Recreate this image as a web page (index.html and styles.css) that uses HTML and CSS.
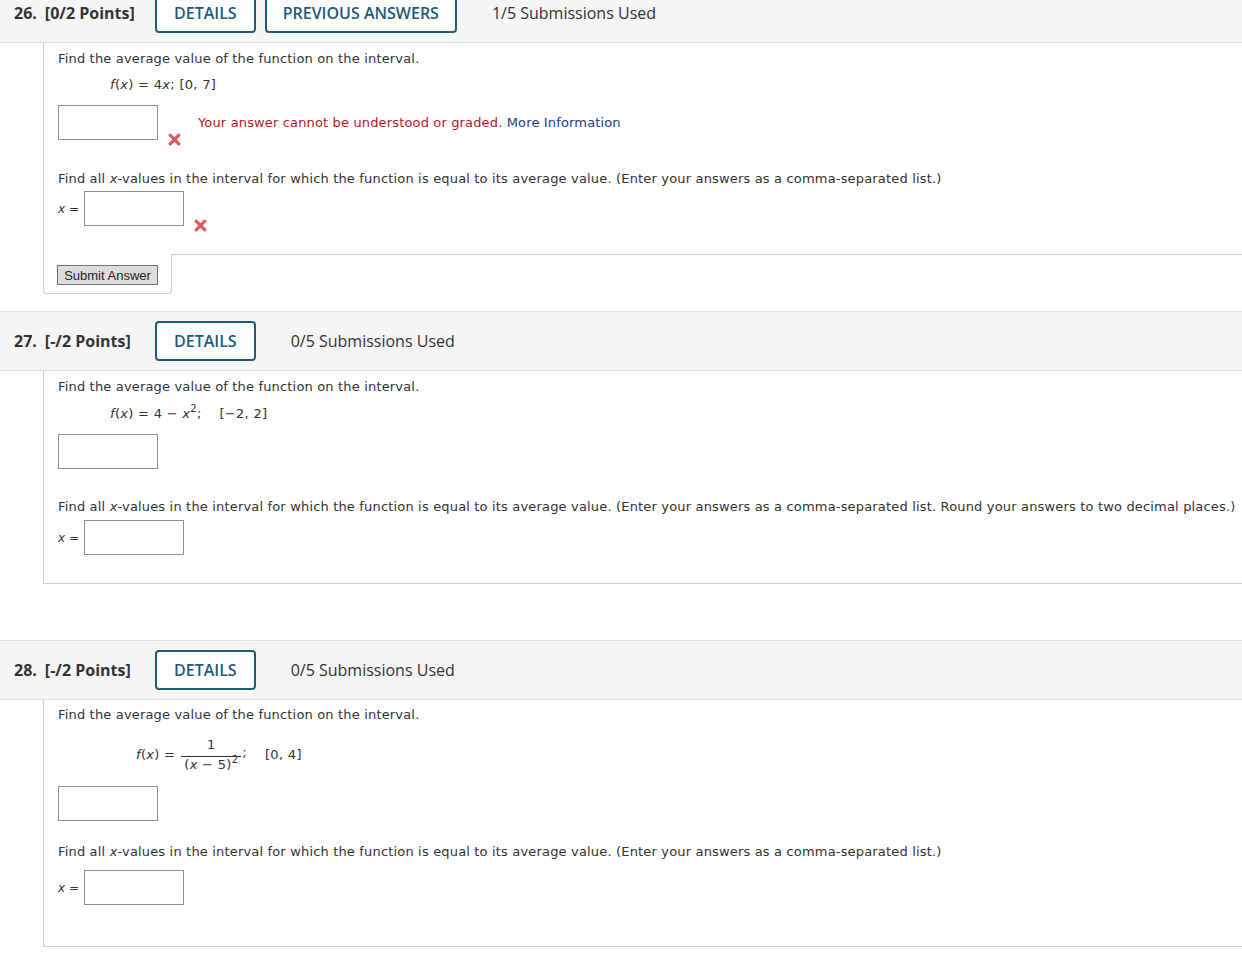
FILE: index.html
```html
<!DOCTYPE html>
<html>
<head>
<meta charset="utf-8">
<link rel="stylesheet" href="styles.css">
</head>
<body>
<div class="page">

  <section class="q q26">
    <div class="q-head">
      <span class="q-title"><span class="q-num">26.</span><span class="q-pts">[0/2 Points]</span></span>
      <button class="btn-outline">DETAILS</button>
      <button class="btn-outline btn-second">PREVIOUS ANSWERS</button>
      <span class="subs">1/5 Submissions Used</span>
    </div>
    <div class="q-body">
      <div class="q-content c26">
        <div class="line">Find the average value of the function on the interval.</div>
        <div class="line math m-simple"><i>f</i>(<i>x</i>) = 4<i>x</i>; [0, 7]</div>
        <div class="ans-row r1">
          <span class="ans-box"></span>
          <svg class="xmark" viewBox="0 0 13 13" width="13" height="13"><path d="M2.2 2.2 L10.8 10.8 M10.8 2.2 L2.2 10.8" stroke="#e4575c" stroke-width="3.2" stroke-linecap="round"/></svg>
          <span class="err">Your answer cannot be understood or graded. <a class="more">More Information</a></span>
        </div>
        <div class="line p2">Find all <i>x</i>-values in the interval for which the function is equal to its average value. (Enter your answers as a comma-separated list.)</div>
        <div class="ans-row r2">
          <span class="xeq"><i>x</i> =</span>
          <span class="ans-box"></span>
          <svg class="xmark" viewBox="0 0 13 13" width="13" height="13"><path d="M2.2 2.2 L10.8 10.8 M10.8 2.2 L2.2 10.8" stroke="#e4575c" stroke-width="3.2" stroke-linecap="round"/></svg>
        </div>
      </div>
      <div class="submit-tab"><button class="submit">Submit Answer</button></div>
    </div>
  </section>

  <section class="q q27">
    <div class="q-head">
      <span class="q-title"><span class="q-num">27.</span><span class="q-pts">[-/2 Points]</span></span>
      <button class="btn-outline">DETAILS</button>
      <span class="subs">0/5 Submissions Used</span>
    </div>
    <div class="q-body">
      <div class="q-content c27">
        <div class="line">Find the average value of the function on the interval.</div>
        <div class="line math m-simple"><i>f</i>(<i>x</i>) = 4 − <i>x</i><sup>2</sup>;&nbsp;&nbsp;&nbsp; [−2, 2]</div>
        <div class="ans-row r1"><span class="ans-box"></span></div>
        <div class="line p2">Find all <i>x</i>-values in the interval for which the function is equal to its average value. (Enter your answers as a comma-separated list. Round your answers to two decimal places.)</div>
        <div class="ans-row r2">
          <span class="xeq"><i>x</i> =</span>
          <span class="ans-box"></span>
        </div>
      </div>
    </div>
  </section>

  <section class="q q28">
    <div class="q-head">
      <span class="q-title"><span class="q-num">28.</span><span class="q-pts">[-/2 Points]</span></span>
      <button class="btn-outline">DETAILS</button>
      <span class="subs">0/5 Submissions Used</span>
    </div>
    <div class="q-body">
      <div class="q-content c28">
        <div class="line">Find the average value of the function on the interval.</div>
        <div class="math m-frac">
          <span class="fx"><i>f</i>(<i>x</i>) =</span>
          <span class="frac">
            <span class="num">1</span>
            <span class="den">(<i>x</i> − 5)<sup>2</sup></span>
          </span>
          <span class="semi">;</span>
          <span class="interval">[0, 4]</span>
        </div>
        <div class="ans-row r1"><span class="ans-box"></span></div>
        <div class="line p2">Find all <i>x</i>-values in the interval for which the function is equal to its average value. (Enter your answers as a comma-separated list.)</div>
        <div class="ans-row r2">
          <span class="xeq"><i>x</i> =</span>
          <span class="ans-box"></span>
        </div>
      </div>
    </div>
  </section>

</div>
</body>
</html>
```
FILE: styles.css
```css
html, body {
  margin: 0;
  padding: 0;
  background: #ffffff;
}

body {
  font-family: "DejaVu Sans", Verdana, sans-serif;
  font-size: 13px;
  color: #333333;
  overflow: hidden;
}

.page {
  margin-top: -17px;
}

.q-head {
  display: flex;
  align-items: center;
  height: 58px;
  background: #f5f5f5;
  border-top: 1px solid #e2e2e2;
  border-bottom: 1px solid #dcdcdc;
  padding-left: 14px;
  font-family: "Open Sans", sans-serif;
}

.q-title {
  display: flex;
  width: 122px;
  margin-right: 19px;
  font-weight: 700;
  font-size: 16px;
  color: #333333;
}

.q-pts {
  margin-left: 8px;
}

.btn-outline {
  box-sizing: border-box;
  height: 40px;
  padding: 0 17px;
  border: 2px solid #1f5a78;
  border-radius: 4px;
  background: #ffffff;
  color: #1f5a78;
  font-family: "Open Sans", sans-serif;
  font-size: 16px;
  font-weight: 600;
}

.btn-second {
  margin-left: 9px;
  padding: 0 16px;
}

.subs {
  margin-left: 35px;
  font-size: 16px;
  color: #333333;
}

.q-body {
  margin-left: 43px;
}

.q-content {
  border-left: 1px solid #cccccc;
  border-bottom: 1px solid #cccccc;
  padding: 8px 0 0 14px;
}

.line {
  line-height: 16px;
  white-space: nowrap;
  letter-spacing: 0.17px;
}

.math {
  margin-top: 10px;
  padding-left: 52px;
  letter-spacing: 0.3px;
}

sup {
  font-size: 10px;
  line-height: 0;
  vertical-align: 6px;
}

.ans-row {
  display: flex;
  align-items: flex-start;
}

.ans-box {
  box-sizing: border-box;
  width: 100px;
  height: 35px;
  border: 1px solid #8f8f8f;
  background: #ffffff;
  flex: none;
}

.xmark {
  margin-left: 10px;
  margin-top: 28px;
  flex: none;
}

.err {
  margin-left: 17px;
  margin-top: 10px;
  line-height: 16px;
  color: #b0191e;
  letter-spacing: 0.15px;
}

.more {
  color: #1f3a85;
}

.xeq {
  width: 26px;
  line-height: 36px;
  font-size: 12px;
}

/* question 26 */
.c26 .r1 { margin-top: 12px; }
.c26 .p2 { margin-top: 25px; }
.c26 .r2 { margin-top: 4px; }
.c26 { padding-bottom: 22px; }

.submit-tab {
  box-sizing: border-box;
  width: 129px;
  margin-top: -1px;
  background: #ffffff;
  border: 1px solid #cccccc;
  border-top: none;
  border-radius: 0 0 4px 4px;
  padding: 11px 0 8px 13px;
}

.submit {
  box-sizing: border-box;
  width: 101px;
  height: 20px;
  padding: 0;
  background: #dddddd;
  border: 1px solid #707070;
  border-radius: 0;
  font-family: "Liberation Sans", Arial, sans-serif;
  font-size: 13px;
  color: #222222;
  display: block;
}

/* question 27 */
.q27 { margin-top: 17px; }
.c27 .math { margin-top: 11px; }
.c27 .r1 { margin-top: 12px; }
.c27 .p2 { margin-top: 30px; }
.c27 .r2 { margin-top: 5px; }
.c27 { padding-bottom: 27px; }

/* question 28 */
.q28 { margin-top: 56px; }
.c28 { padding-top: 7px; padding-bottom: 40px; }

.m-frac {
  display: flex;
  align-items: center;
  padding-left: 78px;
  margin-top: 11px;
  height: 40px;
}

.fx {
  margin-right: 6px;
}

.frac {
  display: inline-flex;
  flex-direction: column;
  align-items: center;
}

.num {
  line-height: 16px;
  padding: 0 2px 3px;
  border-bottom: 1px solid #333333;
  align-self: stretch;
  text-align: center;
}

.den {
  line-height: 14px;
  padding: 1px 3px 0;
}

.semi {
  margin-left: 1px;
  margin-bottom: 4px;
}

.interval {
  margin-left: 18px;
}

.c28 .r1 { margin-top: 12px; }
.c28 .p2 { margin-top: 23px; }
.c28 .r2 { margin-top: 10px; }
```
